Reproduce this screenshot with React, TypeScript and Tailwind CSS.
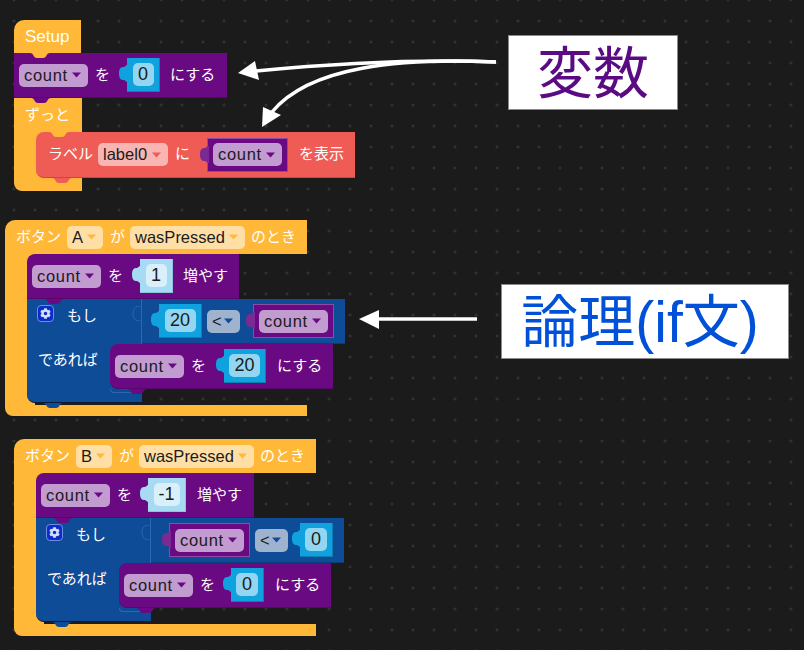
import { FaCog } from "react-icons/fa"

const TONES = {
  purple: { box: "bg-[#C29BD0]", caret: "#6A0A82" },
  red: { box: "bg-[#F8B5B1]", caret: "#EF5B55" },
  orange: { box: "bg-[#FFDFA6]", caret: "#FFB838" },
  blue: { box: "bg-[#9FB3CF]", caret: "#0F4C98" },
}

const Tab = ({ color, className }: { color: string; className: string }) => (
  <svg width="20" height="5" viewBox="0 0 20 5" className={`absolute z-10 ${className}`}>
    <path d="M0 0C4 0 3 5 7 5H13C17 5 16 0 20 0Z" fill={color} />
  </svg>
)

const Knob = ({ color, className = "" }: { color: string; className?: string }) => (
  <svg width="9" height="17" viewBox="0 0 9 17" className={`absolute -left-[8px] top-[7px] ${className}`}>
    <path d="M9 0C6 0 7 2 4 2C1 2 0 5 0 8.5C0 12 1 15 4 15C7 15 6 17 9 17Z" fill={color} />
  </svg>
)

const Drop = ({ label, width, tone, spaced = false }: { label: string; width: string; tone: keyof typeof TONES; spaced?: boolean }) => (
  <div className={`flex h-[23px] shrink-0 items-center justify-between rounded-[5px] pl-[5px] pr-[6px] text-[16.5px] text-[#1b1b1b] ${width} ${TONES[tone].box}`}>
    <span className={spaced ? "tracking-[0.7px]" : ""}>{label}</span>
    <svg width="11" height="6" viewBox="0 0 11 6">
      <path d="M1 0.5H10L5.5 5.5Z" fill={TONES[tone].caret} />
    </svg>
  </div>
)

const Value = ({ value, width, inner, light = false, className = "" }: { value: string; width: string; inner: string; light?: boolean; className?: string }) => (
  <div className={`relative flex h-[34px] shrink-0 items-center justify-center border-b border-r ${width} ${className} ${light ? "border-[#8CC3DC] bg-[#A6DBF3]" : "border-[#0C7FB0] bg-[#0FA2DE]"}`}>
    <Knob color={light ? "#A6DBF3" : "#0FA2DE"} />
    <div className={`flex h-[23px] items-center justify-center rounded-[5px] text-[18px] text-[#1b1b1b] ${inner} ${light ? "bg-[#D9F0FB]" : "bg-[#93D6F2]"}`}>
      {value}
    </div>
  </div>
)

const Reporter = ({ className = "" }: { className?: string }) => (
  <div className={`relative flex h-[34px] w-[81px] shrink-0 items-center justify-center border border-[#8F4BA3] bg-[#6A0A82] ${className}`}>
    <Knob color="#7B2A94" />
    <Drop label="count" width="w-[69px]" tone="purple" spaced />
  </div>
)

const Word = ({ children, className = "" }: { children: string; className?: string }) => (
  <span className={`shrink-0 whitespace-nowrap text-[15px] text-white ${className}`}>{children}</span>
)

const Gear = () => (
  <div className="flex h-[17px] w-[17px] shrink-0 items-center justify-center rounded-[4px] border border-[#6F8DE0] bg-[#0B2BCB]">
    <FaCog size={11} color="#D5DEFA" />
  </div>
)

const Setter = ({ width, value, valueWidth, inner, word, gap, wordGap, light, className = "" }: {
  width: string; value: string; valueWidth: string; inner: string; word: string; gap: string; wordGap: string; light?: boolean; className?: string
}) => (
  <div className={`relative flex h-[45px] shrink-0 items-center border-b border-[#560769] bg-[#6A0A82] pl-[5px] ${width} ${className}`}>
    <Drop label="count" width="w-[69px]" tone="purple" spaced />
    <Word className="ml-[7px]">を</Word>
    <Value value={value} width={valueWidth} inner={inner} light={light} className={gap} />
    <Word className={wordGap}>{word}</Word>
    <Tab color="#6A0A82" className="left-[17px] -bottom-[6px]" />
  </div>
)

const Header = ({ button }: { button: string }) => (
  <div className="relative flex h-[34px] w-[302px] items-center rounded-tl-[10px] bg-[#FFB838] pl-[11px]">
    <Word>ボタン</Word>
    <div className="ml-[6px]">
      <Drop label={button} width="w-[36px]" tone="orange" />
    </div>
    <Word className="ml-[7px]">が</Word>
    <div className="ml-[5px]">
      <Drop label="wasPressed" width="w-[115px]" tone="orange" />
    </div>
    <Word className="ml-[6px]">のとき</Word>
    <Tab color="#FFB838" className="left-[34px] -bottom-[5px]" />
  </div>
)

const IfBlock = ({ children, setter, width }: { children: React.ReactNode; setter: React.ReactNode; width: string }) => (
  <div className={`relative flex flex-col ${width}`}>
    <div className="flex h-[45px] w-full bg-[#0F4C98]">
      <div className="relative flex h-full w-[115px] shrink-0 items-start border-r border-[#2C68B0] pl-[10px] pt-[6px]">
        <Gear />
        <Word className="ml-[13px]">もし</Word>
        <svg width="9" height="15" viewBox="0 0 9 15" className="absolute right-0 top-[7px]">
          <path d="M9 0C3 0 1 3 1 7.5C1 12 3 15 9 15" fill="none" stroke="#2C68B0" />
        </svg>
      </div>
      <div className="flex flex-1 items-center border-b border-[#0B3B78]">{children}</div>
    </div>
    <div className="flex h-[45px]">
      <div className="-mr-[8px] flex h-full w-[91px] shrink-0 items-start bg-[#0F4C98] pl-[11px] pt-[5px]">
        <Word>であれば</Word>
      </div>
      {setter}
    </div>
    <div className="relative z-10 h-[14px] w-[115px] rounded-bl-[8px] border-b border-[#0A1C33] bg-[#0F4C98]">
      <div className="absolute right-0 top-0 h-[4px] w-[32px] rounded-bl-[4px] border-b border-l border-[#2C68B0]" />
      <Tab color="#0F4C98" className="left-[16px] -bottom-[6px]" />
    </div>
  </div>
)

const Arrows = () => (
  <svg width="804" height="650" viewBox="0 0 804 650" className="pointer-events-none absolute left-0 top-0 z-20">
    <g fill="none" stroke="#fff" strokeWidth="3.5">
      <path d="M496 62C420 59 340 63 256 71" />
      <path d="M496 62C400 58 310 66 272 112" />
      <path d="M477 319H376" />
    </g>
    <path d="M238 73L255 61L259 80Z" fill="#fff" />
    <path d="M262 127L263 107L281 115Z" fill="#fff" />
    <path d="M359 319L379 310V329Z" fill="#fff" />
  </svg>
)

const App = () => (
  <div className="relative h-[650px] w-[804px] overflow-hidden bg-[#1B1B1B] bg-[radial-gradient(circle,#3A3A3A_1px,transparent_1.2px)] bg-[size:21px_21px] bg-[position:3.5px_10.5px] font-['Liberation_Sans','Noto_Sans_CJK_JP',sans-serif]">
    {/* Setup stack */}
    <div className="absolute left-[14px] top-[20px] flex flex-col">
      <div className="relative flex h-[33px] w-[67px] items-center rounded-tl-[10px] bg-[#FFB838] pl-[11px]">
        <span className="text-[17px] text-white">Setup</span>
        <Tab color="#FFB838" className="left-[16px] -bottom-[5px]" />
      </div>
      <Setter width="w-[213px]" value="0" valueWidth="w-[33px]" inner="w-[21px]" word="にする" gap="ml-[17px]" wordGap="ml-[10px]" />
      <div className="flex h-[34px] w-[68px] items-center bg-[#FFB838] pl-[11px]">
        <Word>ずっと</Word>
      </div>
      <div className="flex h-[46px]">
        <div className="-mr-[8px] w-[30px] bg-[#FFB838]" />
        <div className="relative flex h-[46px] w-[319px] items-center rounded-l-[8px] border-b border-[#C9463F] bg-[#EF5B55] pl-[12px]">
          <Tab color="#FFB838" className="left-[13px] top-0" />
          <Word>ラベル</Word>
          <div className="ml-[5px]">
            <Drop label="label0" width="w-[70px]" tone="red" />
          </div>
          <Word className="ml-[7px]">に</Word>
          <Reporter className="ml-[17px]" />
          <Word className="ml-[11px]">を表示</Word>
          <Tab color="#EF5B55" className="left-[16px] -bottom-[6px]" />
        </div>
      </div>
      <div className="h-[13px] w-[68px] rounded-bl-[8px] bg-[#FFB838]" />
    </div>

    {/* Button A */}
    <div className="absolute left-[5px] top-[220px] flex w-[340px] flex-col">
      <Header button="A" />
      <div className="flex">
        <div className="-mr-[8px] w-[30px] shrink-0 bg-[#FFB838]" />
        <div className="relative flex flex-col">
          <Setter width="w-[212px]" value="1" valueWidth="w-[33px]" inner="w-[21px]" word="増やす" gap="ml-[17px]" wordGap="ml-[10px]" light className="z-10 rounded-tl-[8px]" />
          <IfBlock
            width="w-[318px]"
            setter={
              <Setter width="w-[223px]" value="20" valueWidth="w-[42px]" inner="w-[31px]" word="にする" gap="ml-[18px]" wordGap="ml-[11px]" className="z-20 rounded-l-[8px]" />
            }
          >
            <div className="flex items-center pl-[17px]">
              <Value value="20" width="w-[43px]" inner="w-[31px]" />
              <div className="ml-[5px]">
                <Drop label="<" width="w-[33px]" tone="blue" />
              </div>
              <Reporter className="ml-[13px]" />
            </div>
          </IfBlock>
          <div className="h-[2px]" />
        </div>
      </div>
      <div className="h-[11px] w-[302px] rounded-bl-[8px] bg-[#FFB838]" />
    </div>

    {/* Button B */}
    <div className="absolute left-[14px] top-[439px] flex w-[340px] flex-col">
      <Header button="B" />
      <div className="flex">
        <div className="-mr-[8px] w-[30px] shrink-0 bg-[#FFB838]" />
        <div className="relative flex flex-col">
          <Setter width="w-[218px]" value="-1" valueWidth="w-[38px]" inner="w-[26px]" word="増やす" gap="ml-[16px]" wordGap="ml-[11px]" light className="z-10 rounded-tl-[8px]" />
          <IfBlock
            width="w-[308px]"
            setter={
              <Setter width="w-[212px]" value="0" valueWidth="w-[33px]" inner="w-[22px]" word="にする" gap="ml-[16px]" wordGap="ml-[11px]" className="z-20 rounded-l-[8px]" />
            }
          >
            <div className="flex items-center pl-[18px]">
              <Reporter />
              <div className="ml-[5px]">
                <Drop label="<" width="w-[33px]" tone="blue" />
              </div>
              <Value value="0" width="w-[33px]" inner="w-[22px]" className="ml-[12px]" />
            </div>
          </IfBlock>
          <div className="h-[2px]" />
        </div>
      </div>
      <div className="h-[12px] w-[302px] rounded-bl-[8px] bg-[#FFB838]" />
    </div>

    <Arrows />

    <div className="absolute left-[508px] top-[35px] flex h-[75px] w-[170px] items-center justify-center border border-[#8A8A8A] bg-white pt-[2px] text-[56px] text-[#5A0A82]">
      変数
    </div>
    <div className="absolute left-[501px] top-[284px] flex h-[75px] w-[288px] items-center justify-center border border-[#8A8A8A] bg-white pr-[10px] pt-[3px] text-[57px] text-[#0050D8]">
      論理(if文)
    </div>
  </div>
)

export default App
